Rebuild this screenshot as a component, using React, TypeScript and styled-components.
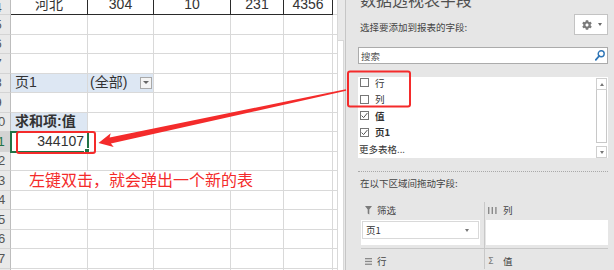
import React from 'react';
import styled, { createGlobalStyle } from 'styled-components';
import { FaCog } from 'react-icons/fa';

type CellSpec = {
  text?: string;
  align?: 'left' | 'center' | 'right';
  fill?: boolean;
  bold?: boolean;
  span?: number;
  drop?: boolean;
  selected?: boolean;
  note?: boolean;
};

type RowSpec = { n: number; head?: boolean; active?: boolean; cells?: CellSpec[] };

const COLS = 6;

const rows: RowSpec[] = [
  {
    n: 4,
    head: true,
    cells: [
      { text: '河北', align: 'center' },
      { text: '304', align: 'center' },
      { text: '10', align: 'center' },
      { text: '231', align: 'center' },
      { text: '4356', align: 'center' },
    ],
  },
  { n: 5 },
  { n: 6 },
  { n: 7 },
  { n: 8, cells: [{ text: '页1', fill: true }, { text: '(全部)', fill: true, drop: true }] },
  { n: 9 },
  { n: 10, cells: [{ text: '求和项:值', fill: true, bold: true }] },
  { n: 11, active: true, cells: [{ text: '344107', align: 'right', selected: true }] },
  { n: 12 },
  { n: 13, cells: [{ text: '左键双击，就会弹出一个新的表', note: true, span: 4 }] },
  { n: 14 },
  { n: 15 },
  { n: 16 },
  { n: 17 },
  { n: 18 },
];

const fields = [
  { name: '行', checked: false },
  { name: '列', checked: false },
  { name: '值', checked: true },
  { name: '页1', checked: true },
];

const GlobalStyle = createGlobalStyle`
  html, body {
    margin: 0;
    padding: 0;
    overflow: hidden;
    background: #fff;
  }
  body {
    font-family: "Liberation Sans", "Noto Sans CJK SC", sans-serif;
  }
`;

const Page = styled.div`
  position: relative;
  display: flex;
  width: 614px;
  height: 270px;
  overflow: hidden;
`;

const Sheet = styled.div`
  display: grid;
  grid-template-columns: 11px 77px 66px 77px 53px 49px 3px;
  grid-template-rows: 15px;
  grid-auto-rows: 19.5px;
  align-content: start;
  width: 336px;
  flex-shrink: 0;
`;

const RowHead = styled.div<{ $active?: boolean }>`
  display: flex;
  justify-content: flex-end;
  align-items: center;
  overflow: hidden;
  background: ${(p) => (p.$active ? '#d3d3d3' : '#e9e9e9')};
  border-right: 1px solid #bdbdbd;
  border-bottom: 1px solid #d4d4d4;
  color: ${(p) => (p.$active ? '#217346' : '#555')};
  font-size: 13px;
  line-height: 19px;

  span {
    flex-shrink: 0;
    width: 24px;
    text-align: center;
  }
`;

const Cell = styled.div<{
  $head?: boolean;
  $fill?: boolean;
  $bold?: boolean;
  $align?: string;
  $span?: number;
  $note?: boolean;
  $drop?: boolean;
}>`
  position: relative;
  grid-column: span ${(p) => p.$span ?? 1};
  display: flex;
  align-items: ${(p) => (p.$head ? 'flex-end' : 'center')};
  justify-content: ${(p) =>
    p.$drop ? 'space-between' : p.$align === 'center' ? 'center' : p.$align === 'right' ? 'flex-end' : 'flex-start'};
  padding: 0 ${(p) => (p.$align === 'right' ? '3px' : p.$drop ? '1px' : '0')} 0
    ${(p) => (p.$note ? '18px' : p.$drop ? '2px' : p.$align ? '0' : '4px')};
  border-right: 1px solid ${(p) => (p.$head ? '#2a2a2a' : '#d9d9d9')};
  border-bottom: 1px solid ${(p) => (p.$head ? '#2a2a2a' : '#d9d9d9')};
  background: ${(p) => (p.$fill ? '#dde7f3' : '#fff')};
  color: ${(p) => (p.$note ? '#f42b2b' : '#333')};
  font-size: ${(p) => (p.$note ? '16px' : '14px')};
  font-weight: ${(p) => (p.$bold ? 'bold' : 'normal')};
  line-height: 19px;
  white-space: nowrap;
`;

const Selection = styled.div`
  position: absolute;
  z-index: 1;
  top: -1px;
  left: -1px;
  width: 79px;
  height: 21.5px;
  box-sizing: border-box;
  border: 2px solid #217346;

  &::after {
    content: '';
    position: absolute;
    right: -3px;
    bottom: -3px;
    width: 4px;
    height: 4px;
    background: #217346;
    border: 1px solid #fff;
  }
`;

const DropButton = styled.div`
  width: 12px;
  height: 12px;
  box-sizing: border-box;
  border: 1px solid #a9a9a9;
  background: #f4f4f4;
  display: flex;
  align-items: center;
  justify-content: center;

  &::before {
    content: '';
    border-left: 3px solid transparent;
    border-right: 3px solid transparent;
    border-top: 3px solid #666;
  }
`;

const SheetScroll = styled.div`
  width: 9px;
  flex-shrink: 0;
  display: flex;
  padding: 40px 1px 0;
  box-sizing: border-box;
  background: #e9e9e9;
`;

const SheetThumb = styled.div`
  flex: 1;
  background: #fff;
  border: 1px solid #d8d8d8;
  border-bottom: none;
`;

const Panel = styled.aside`
  flex: 1;
  display: flex;
  flex-direction: column;
  padding: 0 6px 0 12px;
  background: #e6e6e6;
  border-left: 1px solid #c6c6c6;
  font-family: "Noto Sans CJK SC", "Liberation Sans", sans-serif;
  font-size: 9.5px;
  color: #444;
`;

const Title = styled.div`
  margin-top: -11px;
  padding-left: 2px;
  font-size: 16px;
  line-height: 20px;
  color: #505050;
`;

const ChooseRow = styled.div`
  display: flex;
  justify-content: space-between;
  align-items: center;
  margin-top: 5px;
`;

const Caption = styled.div<{ $gap?: number }>`
  padding-left: 2px;
  margin-top: ${(p) => p.$gap ?? 0}px;
  line-height: 14px;
  white-space: nowrap;
`;

const GearButton = styled.div`
  width: 34px;
  height: 21px;
  box-sizing: border-box;
  display: flex;
  align-items: center;
  gap: 6px;
  padding-left: 7px;
  background: #fff;
  border: 1px solid #c3c3c3;
  color: #7a7a7a;
`;

const Caret = styled.span<{ $up?: boolean; $color?: string }>`
  width: 0;
  height: 0;
  border-left: 2.5px solid transparent;
  border-right: 2.5px solid transparent;
  ${(p) => (p.$up ? 'border-bottom' : 'border-top')}: 3px solid ${(p) => p.$color ?? '#6a6a6a'};
`;

const Search = styled.div`
  margin-top: 12px;
  height: 17px;
  box-sizing: border-box;
  display: flex;
  align-items: center;
  justify-content: space-between;
  padding: 0 2px 0 2px;
  background: #fff;
  border: 1px solid #ababab;
  color: #555;
`;

const FieldList = styled.div`
  margin-top: 13px;
  height: 81px;
  display: flex;
  background: #fff;
  overflow: hidden;
`;

const Fields = styled.div`
  flex: 1;
  margin-top: -2.75px;
  padding-left: 2px;
`;

const FieldItem = styled.div<{ $bold?: boolean }>`
  display: flex;
  align-items: center;
  gap: 6px;
  height: 16.5px;
  font-weight: ${(p) => (p.$bold ? 'bold' : 'normal')};
  color: #333;
`;

const Check = styled.span`
  width: 9px;
  height: 9px;
  box-sizing: border-box;
  display: flex;
  align-items: center;
  justify-content: center;
  background: #fff;
  border: 1px solid #777;
`;

const MoreLink = styled.div`
  height: 16.5px;
  display: flex;
  align-items: center;
  margin-left: -1px;
  color: #333;
`;

const ListScroll = styled.div`
  width: 11px;
  margin-right: 1px;
  display: flex;
  flex-direction: column;
`;

const ScrollButton = styled.div<{ $gap?: number }>`
  height: 12px;
  margin-top: ${(p) => p.$gap ?? 0}px;
  box-sizing: border-box;
  display: flex;
  align-items: center;
  justify-content: center;
  border: 1px solid #cfcfcf;
  background: #fff;
`;

const ScrollThumb = styled.div`
  height: 53px;
  box-sizing: border-box;
  border: 1px solid #c8c8c8;
  border-top: none;
  background: #fff;
`;

const Dotted = styled.div`
  margin-top: 13px;
  border-top: 1px dotted #a9a9a9;
`;

const AreaGrid = styled.div`
  display: grid;
  grid-template-columns: 124px 1fr;
  margin-top: 12px;
  margin-left: 3px;
`;

const Area = styled.div<{ $left?: boolean; $top?: boolean }>`
  display: flex;
  flex-direction: column;
  padding-top: ${(p) => (p.$top ? 0 : 4)}px;
  padding-bottom: ${(p) => (p.$top ? 3 : 0)}px;
  border-right: ${(p) => (p.$left ? '1px solid #c8c8c8' : 'none')};
  border-bottom: ${(p) => (p.$top ? '1px solid #c8c8c8' : 'none')};
`;

const AreaHead = styled.div<{ $left?: boolean }>`
  display: flex;
  align-items: center;
  gap: ${(p) => (p.$left ? 5 : 6)}px;
  height: 16px;
  padding-left: ${(p) => (p.$left ? 4 : 3)}px;
  color: #444;

  svg {
    flex-shrink: 0;
  }
`;

const Sigma = styled.span`
  width: 9px;
  font-family: "DejaVu Sans", sans-serif;
  font-size: 9px;
  color: #7a7a7a;
`;

const AreaBox = styled.div<{ $left?: boolean }>`
  height: 25px;
  margin: 2px ${(p) => (p.$left ? 4 : 0)}px 0 ${(p) => (p.$left ? 0 : 1)}px;
  padding: 1px;
  box-sizing: border-box;
  background: #fff;
`;

const AreaItem = styled.div`
  height: 18px;
  box-sizing: border-box;
  display: flex;
  align-items: center;
  justify-content: space-between;
  padding: 0 9px 0 3px;
  border: 1px solid #d9d9d9;
  color: #333;
`;

const Annotations = styled.svg`
  position: absolute;
  z-index: 2;
  top: 0;
  left: 0;
  pointer-events: none;
`;

const Funnel = () => (
  <svg width="7" height="9" viewBox="0 0 7 9">
    <path d="M0 0H7L4.3 3.6V8.6L2.7 7.6V3.6Z" fill="#7a7a7a" />
  </svg>
);

const ColumnsIcon = () => (
  <svg width="9" height="7" viewBox="0 0 9 7">
    <rect x="0" y="0" width="1.4" height="7" fill="#8a8a8a" />
    <rect x="3.6" y="0" width="1.4" height="7" fill="#8a8a8a" />
    <rect x="7.2" y="0" width="1.4" height="7" fill="#8a8a8a" />
  </svg>
);

const RowsIcon = () => (
  <svg width="7" height="7" viewBox="0 0 7 7">
    <rect x="0" y="0" width="7" height="1.3" fill="#8a8a8a" />
    <rect x="0" y="2.8" width="7" height="1.3" fill="#8a8a8a" />
    <rect x="0" y="5.6" width="7" height="1.3" fill="#8a8a8a" />
  </svg>
);

const SearchIcon = () => (
  <svg width="10" height="11" viewBox="0 0 10 11">
    <circle cx="6.2" cy="3.8" r="3" fill="none" stroke="#2e75b6" strokeWidth="1.4" />
    <path d="M4.1 6L0.8 9.8" stroke="#2e75b6" strokeWidth="1.8" strokeLinecap="round" />
  </svg>
);

const Tick = () => (
  <svg width="7" height="7" viewBox="0 0 7 7">
    <path d="M0.6 3.6L2.6 5.6L6.4 1" fill="none" stroke="#555" strokeWidth="1" />
  </svg>
);

const renderRow = (row: RowSpec) => {
  const specs = row.cells ?? [];
  const used = specs.reduce((sum, c) => sum + (c.span ?? 1), 0);
  const fillers: CellSpec[] = Array.from({ length: COLS - used }, () => ({}));
  const all = [...specs, ...fillers];

  return (
    <React.Fragment key={row.n}>
      <RowHead $active={row.active}>
        <span>{row.n}</span>
      </RowHead>
      {all.map((c, i) => (
        <Cell
          key={i}
          $head={row.head && i < specs.length}
          $fill={c.fill}
          $bold={c.bold}
          $align={c.align}
          $span={c.span}
          $note={c.note}
          $drop={c.drop}
        >
          {c.text}
          {c.drop && <DropButton />}
          {c.selected && <Selection />}
        </Cell>
      ))}
    </React.Fragment>
  );
};

const App: React.FC = () => {
  return (
    <Page>
      <GlobalStyle />
      <Sheet>{rows.map(renderRow)}</Sheet>
      <SheetScroll>
        <SheetThumb />
      </SheetScroll>

      <Panel>
        <Title>数据透视表字段</Title>
        <ChooseRow>
          <Caption $gap={4}>选择要添加到报表的字段:</Caption>
          <GearButton>
            <FaCog size={10} />
            <Caret />
          </GearButton>
        </ChooseRow>

        <Search>
          <span>搜索</span>
          <SearchIcon />
        </Search>

        <FieldList>
          <Fields>
            {fields.map((f) => (
              <FieldItem key={f.name} $bold={f.checked}>
                <Check>{f.checked && <Tick />}</Check>
                {f.name}
              </FieldItem>
            ))}
            <MoreLink>更多表格...</MoreLink>
          </Fields>
          <ListScroll>
            <ScrollButton $gap={1}>
              <Caret $up $color="#777" />
            </ScrollButton>
            <ScrollThumb />
            <ScrollButton $gap={3}>
              <Caret $color="#777" />
            </ScrollButton>
          </ListScroll>
        </FieldList>

        <Dotted />
        <Caption $gap={4}>在以下区域间拖动字段:</Caption>

        <AreaGrid>
          <Area $left $top>
            <AreaHead $left>
              <Funnel />
              筛选
            </AreaHead>
            <AreaBox $left>
              <AreaItem>
                页1
                <Caret $color="#777" />
              </AreaItem>
            </AreaBox>
          </Area>
          <Area $top>
            <AreaHead>
              <ColumnsIcon />
              列
            </AreaHead>
            <AreaBox />
          </Area>
          <Area $left>
            <AreaHead $left>
              <RowsIcon />
              行
            </AreaHead>
          </Area>
          <Area>
            <AreaHead>
              <Sigma>Σ</Sigma>
              值
            </AreaHead>
          </Area>
        </AreaGrid>
      </Panel>

      <Annotations width="614" height="270" viewBox="0 0 614 270">
        <rect x="17" y="132" width="78" height="21" rx="2" fill="none" stroke="#f42b2b" strokeWidth="2" />
        <rect x="348" y="71.5" width="62" height="35" rx="2" fill="none" stroke="#f42b2b" strokeWidth="2" />
        <polygon
          points="98.5,143 110.7,133.2 109.6,137.6 345.8,89.2 346.2,90.8 110.9,143.4 113.7,146.9"
          fill="#f42b2b"
        />
      </Annotations>
    </Page>
  );
};

export default App;
